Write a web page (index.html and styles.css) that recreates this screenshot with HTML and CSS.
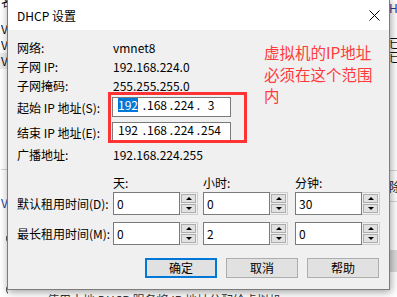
FILE: index.html
```html
<!DOCTYPE html>
<html lang="zh-CN">
<head>
<meta charset="utf-8">
<title>DHCP 设置</title>
<link rel="stylesheet" href="styles.css">
</head>
<body>
<div class="screen">
  <div class="bg">
    <div class="bg-left">
      <span class="bg-c first">名</span>
      <span class="bg-c v gap11">V</span>
      <span class="bg-c v">V</span>
      <span class="bg-c v band">V</span>
      <div class="bg-line l1"></div>
      <span class="bg-c v blue g25">V</span>
      <div class="radio r1"></div>
      <div class="radio r2"></div>
    </div>
    <div class="bg-mid">
      <div class="bg-bottom">使用本地 DHCP 服务将 IP 地址分配给虚拟机</div>
    </div>
    <div class="bg-right">
      <span class="bg-c blue">He</span>
      <span class="bg-c g20">已</span>
      <span class="bg-c tight">已</span>
      <div class="bg-line l2"></div>
      <span class="bg-c">除</span>
      <div class="bg-line"></div>
      <div class="bg-band"></div>
    </div>
  </div>

  <div class="dialog">
    <div class="titlebar">
      <span class="title">DHCP 设置</span>
      <svg class="close" width="11" height="11" viewBox="0 0 11 11"><path d="M0.5 0.5L10.5 10.5M10.5 0.5L0.5 10.5" stroke="#000" stroke-width="1" fill="none"/></svg>
    </div>
    <div class="content">
      <div class="row first-row"><span class="lbl">网络:</span><span class="val">vmnet8</span></div>
      <div class="row"><span class="lbl">子网 IP:</span><span class="val">192.168.224.0</span></div>
      <div class="row"><span class="lbl">子网掩码:</span><span class="val">255.255.255.0</span></div>

      <div class="iprow ip1">
        <span class="lbl">起始 IP 地址(S):</span>
        <div class="ipbox">
          <span class="oct"><span class="sel">192</span></span><span class="dot wide">.</span><span class="oct">168</span><span class="dot">.</span><span class="oct">224</span><span class="dot">.</span><span class="oct">3</span>
        </div>
      </div>
      <div class="iprow ip2">
        <span class="lbl">结束 IP 地址(E):</span>
        <div class="ipbox">
          <span class="oct">192</span><span class="dot wide">.</span><span class="oct">168</span><span class="dot">.</span><span class="oct">224</span><span class="dot">.</span><span class="oct">254</span>
        </div>
      </div>
      <div class="row bcast"><span class="lbl">广播地址:</span><span class="val">192.168.224.255</span></div>

      <div class="tgrid thead">
        <span></span><span>天:</span><span>小时:</span><span>分钟:</span>
      </div>
      <div class="tgrid trow">
        <span class="lbl">默认租用时间(D):</span>
        <div class="spin"><div class="sbox">0</div><div class="spinner"><div class="sbtn"><i class="up"></i></div><div class="sbtn"><i class="down"></i></div></div></div>
        <div class="spin"><div class="sbox">0</div><div class="spinner"><div class="sbtn"><i class="up"></i></div><div class="sbtn"><i class="down"></i></div></div></div>
        <div class="spin"><div class="sbox">30</div><div class="spinner"><div class="sbtn"><i class="up"></i></div><div class="sbtn"><i class="down"></i></div></div></div>
      </div>
      <div class="tgrid trow second">
        <span class="lbl">最长租用时间(M):</span>
        <div class="spin"><div class="sbox">0</div><div class="spinner"><div class="sbtn"><i class="up"></i></div><div class="sbtn"><i class="down"></i></div></div></div>
        <div class="spin"><div class="sbox">2</div><div class="spinner"><div class="sbtn"><i class="up"></i></div><div class="sbtn"><i class="down"></i></div></div></div>
        <div class="spin"><div class="sbox">0</div><div class="spinner"><div class="sbtn"><i class="up"></i></div><div class="sbtn"><i class="down"></i></div></div></div>
      </div>

      <div class="buttons">
        <button class="btn default">确定</button>
        <button class="btn">取消</button>
        <button class="btn">帮助</button>
      </div>
    </div>
    <div class="redbox"></div>
    <div class="note">虚拟机的IP地址<br>必须在这个范围<br>内</div>
  </div>
</div>
</body>
</html>
```

FILE: styles.css
```css
* { box-sizing: border-box; }
html, body { margin: 0; padding: 0; }
body { width: 397px; height: 297px; overflow: hidden; background: #fff; }

.screen {
  width: 397px;
  height: 297px;
  position: relative;
  overflow: hidden;
  font-family: "Noto Sans CJK SC", "Noto Sans", sans-serif;
  font-size: 12px;
  color: #000;
  background: #fff;
}

/* background window */
.bg { display: flex; width: 397px; height: 297px; }
.bg-left { width: 8px; flex: none; display: flex; flex-direction: column; padding-left: 1px; overflow: hidden; }
.bg-mid { flex: 1; display: flex; flex-direction: column; justify-content: flex-end; overflow: hidden; }
.bg-right { width: 9px; flex: none; display: flex; flex-direction: column; padding-left: 1px; overflow: hidden; margin-left: -1px; }
.bg-c { display: block; height: 16px; line-height: 16px; white-space: nowrap; color: #111; overflow: hidden; }
.bg-c.first { margin-top: -6px; }
.bg-c.gap11 { margin-top: 11px; }
.bg-c.g20 { margin-top: 20px; height: 14px; line-height: 14px; }
.bg-c.tight { height: 14px; line-height: 14px; }
.bg-c.g25 { margin-top: 25px; }
.bg-c.blue { color: #1c3d9a; }
.bg-c.band { background: #ececec; margin-left: -1px; padding-left: 1px; }
.bg-line { height: 1px; background: #d6d6d6; margin-top: 6px; flex: none; }
.bg-line.l1 { margin-top: 100px; }
.bg-line.l2 { margin-top: 106px; margin-bottom: 8px; }
.bg-band { height: 22px; background: #dadada; margin-top: 48px; flex: none; }
.radio { width: 13px; height: 13px; border: 1px solid #333; border-radius: 50%; margin-left: 5px; flex: none; }
.radio.r1 { margin-top: 21px; }
.radio.r2 { margin-top: 38px; }
.bg-bottom { height: 14px; line-height: 14px; margin-bottom: -10px; padding-left: 39px; color: #333; white-space: nowrap; flex: none; }

/* dialog */
.dialog {
  position: absolute;
  left: 7px;
  top: -1px;
  width: 383px;
  height: 291px;
  border: 1px solid #7c7c7c;
  background: #f0f0f0;
  box-shadow: 1px 2px 8px rgba(0, 0, 0, 0.38);
  display: flex;
  flex-direction: column;
}
.titlebar {
  height: 30px;
  flex: none;
  background: #fff;
  display: flex;
  align-items: center;
  padding-left: 9px;
}
.title { font-size: 12px; }
.close { margin-left: auto; margin-right: 9px; }

.content { padding: 8px 9px 0 9px; display: flex; flex-direction: column; }
.row { display: flex; align-items: center; height: 19px; }
.lbl { width: 96px; flex: none; white-space: nowrap; }
.val { white-space: nowrap; }

.iprow { display: flex; align-items: center; height: 20px; }
.iprow.ip1 { margin-top: 2px; }
.iprow.ip2 { margin-top: 5px; }
.ipbox {
  width: 119px;
  height: 20px;
  margin-left: -1px;
  border: 1px solid #7a7a7a;
  background: #fff;
  display: flex;
  align-items: flex-start;
  padding-left: 5px;
  line-height: 14px;
}
.oct { width: 20px; text-align: center; display: block; }
.dot { width: 7px; text-align: right; padding-right: 1px; display: block; }
.dot.wide { width: 9px; }
.sel { background: #0078d7; color: #fff; display: inline-block; width: 20px; }

.bcast { margin-top: 3px; }

.tgrid { display: grid; grid-template-columns: 96px 90px 92px 84px; }
.thead { margin-top: 10px; height: 18px; line-height: 18px; }
.trow { height: 23px; align-items: center; }
.trow.second { margin-top: 7px; }
.spin { display: flex; width: 85px; height: 23px; }
.sbox {
  width: 67px;
  height: 23px;
  border: 1px solid #7a7a7a;
  background: #fff;
  padding-left: 3px;
  display: flex;
  align-items: center;
  padding-bottom: 1px;
}
.spinner {
  width: 18px;
  height: 23px;
  border: 1px solid #cfcfcf;
  border-left: none;
  padding: 1px;
  display: flex;
  flex-direction: column;
  gap: 1px;
}
.sbtn {
  flex: 1;
  border: 1px solid #adadad;
  background: #e1e1e1;
  display: flex;
  align-items: center;
  justify-content: center;
}
.up, .down { width: 0; height: 0; border-left: 3px solid transparent; border-right: 3px solid transparent; }
.up { border-bottom: 3px solid #000; }
.down { border-top: 3px solid #000; }

.buttons { display: flex; justify-content: flex-end; gap: 9px; margin-top: 13px; padding-right: 1px; }
.btn {
  width: 72px;
  height: 20px;
  border: 1px solid #adadad;
  background: #e1e1e1;
  font-family: "Noto Sans CJK SC", sans-serif;
  font-size: 12px;
  color: #000;
  padding: 0;
  line-height: 16px;
}
.btn.default { border: 2px solid #0078d7; }

/* annotations */
.redbox {
  position: absolute;
  left: 100px;
  top: 92px;
  width: 139px;
  height: 51px;
  border: 3px solid #ff3333;
}
.note {
  position: absolute;
  left: 256px;
  top: 42px;
  font-size: 15.5px;
  line-height: 21.5px;
  color: #ff3b3b;
  white-space: nowrap;
}
```
